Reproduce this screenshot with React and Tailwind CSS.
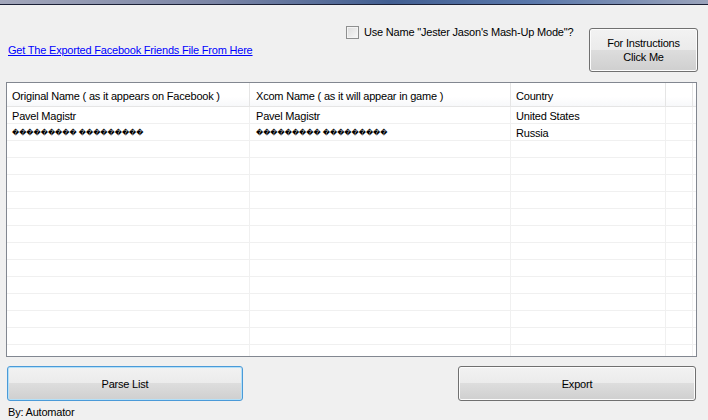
import React from "react";

const font = { fontFamily: '"Liberation Sans", Arial, sans-serif' };

const junk = "\uFFFD".repeat(9) + " " + "\uFFFD".repeat(9);

// rows shown in the grid (the rest stay empty)
const rows = [
  ["Pavel Magistr", "Pavel Magistr", "United States"],
  [junk, junk, "Russia"],
];

const emptyRows = Array.from({ length: 13 });

const WinButton = ({ children, focused, className }) => (
  <button
    className={
      "flex flex-col items-center justify-center rounded-[3px] border text-[11px] leading-[14px] tracking-[-0.2px] text-black bg-[linear-gradient(to_bottom,#f2f2f2_0%,#ebebeb_50%,#dddddd_50%,#cfcfcf_100%)] " +
      (focused
        ? "border-[#4a9ad8] shadow-[inset_0_0_0_1px_#b4e0f8] "
        : "border-[#707070] shadow-[inset_0_0_0_1px_#fcfcfc] ") +
      className
    }
  >
    {children}
  </button>
);

const Cell = ({ text, pl }) => {
  const isJunk = text && text.startsWith("\uFFFD");
  return (
    <div
      className={"border-r border-[#f0f0f0] whitespace-nowrap " + pl}
      style={isJunk ? { fontFamily: '"DejaVu Sans", sans-serif', fontSize: "7px", letterSpacing: "0px" } : undefined}
    >
      {text}
    </div>
  );
};

export default function App() {
  return (
    <div className="w-[708px] h-[420px] overflow-hidden bg-[#f0f0f0] text-black" style={font}>
      {/* window frame strip */}
      <div className="h-[4px] bg-[linear-gradient(to_right,#a3a7bb,#7c86a6_30%,#425f92_55%,#5a78ab_75%,#9aa3bb)]" />
      <div className="h-[1px] bg-[#1b2036]" />

      {/* top controls */}
      <div className="flex items-start pt-[22px] pl-[8px] pr-[10px]">
        <a href="#" className="mt-[16px] w-[243px] whitespace-nowrap text-[11px] leading-[14px] tracking-[-0.2px] text-[#0000ff] underline">
          Get The Exported Facebook Friends File From Here
        </a>
        <label className="ml-[95px] mt-[-1px] flex items-center gap-[5px] whitespace-nowrap text-[11px] leading-[13px] tracking-[-0.2px]">
          <span className="h-[13px] w-[13px] border border-[#8e8f8f] bg-[linear-gradient(135deg,#dcdcdc,#f8f8f8)] shadow-[inset_0_0_0_1px_#f4f4f4]" />
          <span>Use Name "Jester Jason's Mash-Up Mode"?</span>
        </label>
        <WinButton className="ml-auto mt-[1px] h-[44px] w-[109px]">
          <span>For Instructions</span>
          <span>Click Me</span>
        </WinButton>
      </div>

      {/* grid */}
      <div className="mt-[10px] ml-[6px] h-[275px] w-[691px] overflow-hidden border border-[#828790] bg-white text-[11px] tracking-[-0.2px]">
        <div className="grid h-[24px] grid-cols-[243px_261px_155px_1fr] border-b border-[#e5e5e5] bg-[linear-gradient(to_bottom,#ffffff,#ffffff_60%,#f7f8fa)] leading-[26px]">
          <div className="border-r border-[#e5e5e5] pl-[5px] whitespace-nowrap">Original Name ( as it appears on Facebook )</div>
          <div className="border-r border-[#e5e5e5] pl-[6px] whitespace-nowrap">Xcom Name ( as it will appear in game )</div>
          <div className="border-r border-[#e5e5e5] pl-[5px]">Country</div>
          <div className="mr-[3px] border-r border-[#e5e5e5]" />
        </div>
        {rows.map((r, i) => (
          <div key={i} className="grid h-[17px] grid-cols-[243px_261px_155px_1fr] border-b border-[#f0f0f0] leading-[19px]">
            <Cell text={r[0]} pl="pl-[5px]" />
            <Cell text={r[1]} pl="pl-[6px]" />
            <Cell text={r[2]} pl="pl-[5px]" />
            <div className="mr-[3px] border-r border-[#f0f0f0]" />
          </div>
        ))}
        {emptyRows.map((_, i) => (
          <div key={i} className="grid h-[17px] grid-cols-[243px_261px_155px_1fr] border-b border-[#f0f0f0]">
            <div className="border-r border-[#f0f0f0]" />
            <div className="border-r border-[#f0f0f0]" />
            <div className="border-r border-[#f0f0f0]" />
            <div className="mr-[3px] border-r border-[#f0f0f0]" />
          </div>
        ))}
      </div>

      {/* bottom buttons */}
      <div className="mt-[9px] flex pl-[7px] pr-[12px]">
        <WinButton focused className="h-[35px] w-[236px]">Parse List</WinButton>
        <WinButton className="ml-auto h-[35px] w-[238px]">Export</WinButton>
      </div>
      <div className="mt-[4px] pl-[8px] text-[11px] leading-[14px] tracking-[-0.2px]">By: Automator</div>
    </div>
  );
}
